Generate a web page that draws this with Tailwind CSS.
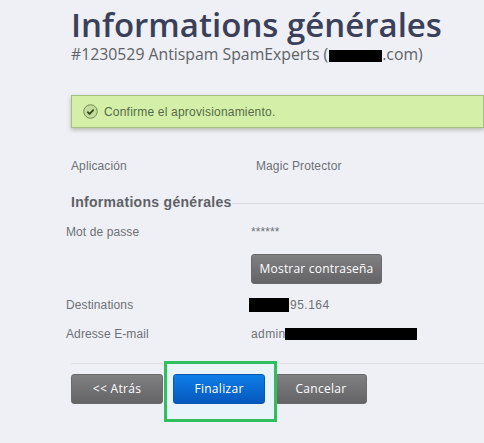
<!DOCTYPE html>
<html lang="fr">
<head>
    <meta charset="UTF-8">
    <title>Informations générales</title>
    <script src="https://cdn.jsdelivr.net/npm/@tailwindcss/browser@4"></script>
</head>
<body class="bg-[#eef0f5] font-['Liberation_Sans',sans-serif] h-[443px] overflow-hidden">
    <div class="relative w-[484px] h-[443px] overflow-hidden pt-[7px]">
        <h1 class="ml-[71px] font-['Open_Sans',sans-serif] font-semibold text-[33px] leading-[36px] text-[#3a4059] whitespace-nowrap">Informations générales</h1>
        <p class="ml-[71px] mt-[1px] font-['Open_Sans',sans-serif] text-[15.8px] leading-[20px] text-[#5f6268] whitespace-nowrap">#1230529 Antispam SpamExperts (<span class="inline-block w-[53px] h-[12px] bg-black ml-[1px] align-[-2px]"></span>.com)</p>

        <div class="ml-[71px] mt-[31px] h-[33px] flex items-center gap-[6px] pl-[11px] bg-[#d4f0a8] border border-[#a3bf82] shadow-[0_2px_4px_rgba(110,120,90,0.45)]">
            <svg class="w-[15px] h-[15px] shrink-0" viewBox="0 0 16 16">
                <circle cx="8" cy="8" r="7.2" fill="#c5dd9c" stroke="#6d8552" stroke-width="1"/>
                <path d="M4.6 8.2l2.4 2.4 4.4-4.6" fill="none" stroke="#2f4a1d" stroke-width="1.9"/>
            </svg>
            <span class="text-[12px] tracking-[0.2px] text-[#56694a] whitespace-nowrap">Confirme el aprovisionamiento.</span>
        </div>

        <div class="ml-[71px] mt-[30px] flex text-[12px] leading-[16px] tracking-[0.1px] text-[#6f7176]">
            <div class="w-[185px]">Aplicación</div>
            <div>Magic Protector</div>
        </div>

        <div class="ml-[71px] mt-[19px] flex items-center">
            <h2 class="font-bold text-[14px] leading-[18px] tracking-[0.3px] text-[#5f6166] whitespace-nowrap">Informations générales</h2>
            <div class="flex-1 h-px bg-[#d9dce3] mt-[2px]"></div>
        </div>

        <div class="ml-[66px] mt-[13px] flex text-[12px] leading-[16px] tracking-[0.1px] text-[#6f7176]">
            <div class="w-[185px]">Mot de passe</div>
            <div>******</div>
        </div>

        <div class="ml-[251px] mt-[14px]">
            <button class="w-[131px] h-[30px] rounded-[3px] border border-[#6a6a6c] bg-gradient-to-b from-[#808083] to-[#646466] text-[12px] tracking-[0.2px] text-white font-['Open_Sans',sans-serif]">Mostrar contraseña</button>
        </div>

        <div class="ml-[66px] mt-[13px] flex text-[12px] leading-[16px] tracking-[0.1px] text-[#6f7176]">
            <div class="w-[183px]">Destinations</div>
            <div class="flex items-center"><span class="w-[40px] h-[14px] bg-black"></span><span class="tracking-[0.5px] ml-[1px]">95.164</span></div>
        </div>

        <div class="ml-[66px] mt-[13px] flex text-[12px] leading-[16px] tracking-[0.1px] text-[#6f7176]">
            <div class="w-[185px]">Adresse E-mail</div>
            <div class="flex items-center"><span class="tracking-[0.4px]">admin</span><span class="w-[132px] h-[12px] bg-black -ml-[1px]"></span></div>
        </div>

        <div class="ml-[71px] mt-[21px] h-px bg-[#dcdfe4]"></div>

        <div class="ml-[71px] mt-[10px] flex">
            <button class="w-[92px] h-[30px] rounded-[3px] border border-[#6a6a6c] bg-gradient-to-b from-[#808083] to-[#646466] text-[12px] tracking-[0.3px] text-white font-['Open_Sans',sans-serif]">&lt;&lt; Atrás</button>
            <button class="relative z-10 ml-[10px] w-[92px] h-[30px] rounded-[3px] border border-[#0a57ad] bg-gradient-to-b from-[#0f7de8] to-[#0659bd] text-[12px] tracking-[0.3px] text-white font-['Open_Sans',sans-serif]">Finalizar</button>
            <button class="ml-[10px] w-[92px] h-[30px] rounded-[3px] border border-[#6a6a6c] bg-gradient-to-b from-[#808083] to-[#646466] text-[12px] tracking-[0.3px] text-white font-['Open_Sans',sans-serif]">Cancelar</button>
        </div>

        <!-- annotation around the Finalizar button -->
        <div class="absolute left-[164px] top-[361px] w-[113px] h-[61px] border-[3px] border-[#2fbf5d] bg-[#e8f3fa]"></div>
    </div>
</body>
</html>
